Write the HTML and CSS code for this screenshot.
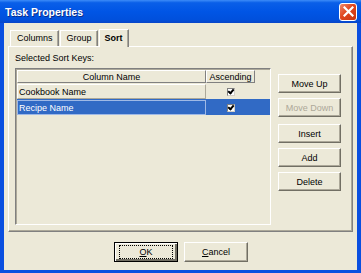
FILE: index.html
```html
<!DOCTYPE html>
<html lang="en">
<head>
    <meta charset="UTF-8">
    <title>Task Properties</title>
    <link rel="stylesheet" href="styles.css">
</head>
<body>
    <div class="window">
        <div class="titlebar">
            <span class="title">Task Properties</span>
            <div class="close-btn">
                <svg width="11" height="11" viewBox="0 0 11 11"><path d="M1.5 1.5 L9.5 9.5 M9.5 1.5 L1.5 9.5" stroke="#fff" stroke-width="2.2" stroke-linecap="square"/></svg>
            </div>
        </div>
        <div class="dialog">
            <div class="tabs">
                <div class="tab">Columns</div>
                <div class="tab">Group</div>
                <div class="tab active">Sort</div>
            </div>
            <div class="panel">
                <div class="label">Selected Sort Keys:</div>
                <div class="panel-body">
                    <div class="grid">
                        <div class="grid-head">
                            <div class="hcell col-name">Column Name</div>
                            <div class="hcell col-asc">Ascending</div>
                        </div>
                        <div class="grid-row">
                            <div class="cell col-name boxed">Cookbook Name</div>
                            <div class="cell col-asc"><span class="check"></span></div>
                        </div>
                        <div class="grid-row selected">
                            <div class="cell col-name boxed">Recipe Name</div>
                            <div class="cell col-asc"><span class="check"></span></div>
                        </div>
                    </div>
                    <div class="side-buttons">
                        <div class="btn">Move Up</div>
                        <div class="btn disabled">Move Down</div>
                        <div class="btn gap-top">Insert</div>
                        <div class="btn">Add</div>
                        <div class="btn">Delete</div>
                    </div>
                </div>
            </div>
            <div class="footer">
                <div class="btn wide default"><span class="focus"><u>O</u>K</span></div>
                <div class="btn wide"><u>C</u>ancel</div>
            </div>
        </div>
    </div>
</body>
</html>
```

FILE: styles.css
```css
body {
    margin: 0;
    font-family: "Liberation Sans", Arial, sans-serif;
    font-size: 9px;
    color: #000;
}
.window {
    width: 361px;
    height: 273px;
    background: #0a4fe0;
    display: flex;
    flex-direction: column;
    box-sizing: border-box;
    padding: 0 4px 3px 4px;
}
.titlebar {
    height: 23px;
    margin: 0 -4px;
    padding: 0 4px 0 5px;
    display: flex;
    align-items: center;
    justify-content: space-between;
    background: linear-gradient(#3d8cf8 0%, #0a5fe8 12%, #0055e5 50%, #0050dc 85%, #0845c8 100%);
}
.title {
    color: #fff;
    font-weight: bold;
    font-size: 10.5px;
    text-shadow: 1px 1px 0 #0b2e8a;
}
.close-btn {
    width: 16px;
    height: 16px;
    border: 1px solid #fff;
    border-radius: 3px;
    background: linear-gradient(135deg, #f08a6c, #e0461f 45%, #c83410);
    display: flex;
    align-items: center;
    justify-content: center;
}
.dialog {
    flex: 1;
    background: #ece9d8;
    display: flex;
    flex-direction: column;
    padding: 5px 4px 0 4px;
}
.tabs {
    display: flex;
    padding-left: 2px;
    height: 18px;
    align-items: flex-end;
}
.tab {
    height: 15px;
    padding: 0 5px 0 6px;
    line-height: 15px;
    border: 1px solid #fff;
    border-right-color: #808080;
    border-bottom: none;
    box-shadow: inset -1px 0 0 #aca899;
    margin-right: 1px;
}
.tab.active {
    height: 17px;
    line-height: 17px;
    font-weight: bold;
    position: relative;
    top: 1px;
    background: #ece9d8;
    z-index: 1;
    padding: 0 5px;
}
.panel {
    height: 186px;
    box-sizing: border-box;
    border: 1px solid #fff;
    border-right-color: #808080;
    border-bottom-color: #808080;
    box-shadow: inset -1px -1px 0 #aca899;
    padding: 5px 7px 0 6px;
    display: flex;
    flex-direction: column;
}
.label {
    height: 13px;
    line-height: 13px;
    margin-bottom: 3px;
}
.panel-body {
    display: flex;
    gap: 7px;
}
.grid {
    width: 256px;
    height: 157px;
    box-sizing: border-box;
    border: 1px solid #808080;
    border-right-color: #fff;
    border-bottom-color: #fff;
    box-shadow: inset 1px 1px 0 #aca899;
    padding: 1px 1px 0 1px;
}
.grid-head, .grid-row {
    display: flex;
}
.hcell {
    height: 13px;
    line-height: 12px;
    text-align: center;
    box-sizing: border-box;
    border: 1px solid #fff;
    border-right-color: #808080;
    border-bottom-color: #808080;
}
.col-name {
    width: 189px;
}
.col-asc {
    width: 49px;
}
.grid-row {
    height: 16px;
}
.cell {
    box-sizing: border-box;
    line-height: 14px;
    padding-left: 1px;
}
.cell.boxed {
    border: 1px solid #fff;
    border-right-color: #aca899;
    border-bottom-color: #aca899;
    margin-top: 1px;
    height: 15px;
}
.cell.col-asc {
    display: flex;
    justify-content: center;
    align-items: center;
    padding-top: 1px;
}
.grid-row.selected {
    background: #316ac5;
    color: #fff;
    margin-right: -1px;
}
.grid-row.selected .boxed {
    border-color: #9fb9e6;
}
.check {
    width: 6px;
    height: 6px;
    background: #fff;
    border: 1px solid #808080;
    border-right-color: #d4d0c8;
    border-bottom-color: #d4d0c8;
    position: relative;
}
.check::after {
    content: "";
    position: absolute;
    left: 1px;
    top: -1px;
    width: 2px;
    height: 4px;
    border: solid #000;
    border-width: 0 2px 2px 0;
    transform: rotate(40deg);
}
.side-buttons {
    display: flex;
    flex-direction: column;
    gap: 5px;
    padding-top: 6px;
}
.btn {
    width: 63px;
    height: 19px;
    box-sizing: border-box;
    border: 1px solid #fff;
    border-right-color: #716f64;
    border-bottom-color: #716f64;
    box-shadow: inset -1px -1px 0 #aca899;
    display: flex;
    align-items: center;
    justify-content: center;
}
.btn.disabled {
    color: #aca899;
}
.btn.gap-top {
    margin-top: 2px;
}
.footer {
    display: flex;
    justify-content: center;
    gap: 6px;
    padding-top: 10px;
    padding-left: 1px;
}
.btn.wide {
    width: 64px;
    height: 20px;
}
.btn.default {
    border: 1px solid #000;
    box-shadow: inset 1px 1px 0 #fff, inset -2px -2px 0 #716f64;
}
.focus {
    border: 1px dotted #000;
    width: 52px;
    height: 12px;
    line-height: 12px;
    text-align: center;
}
```
